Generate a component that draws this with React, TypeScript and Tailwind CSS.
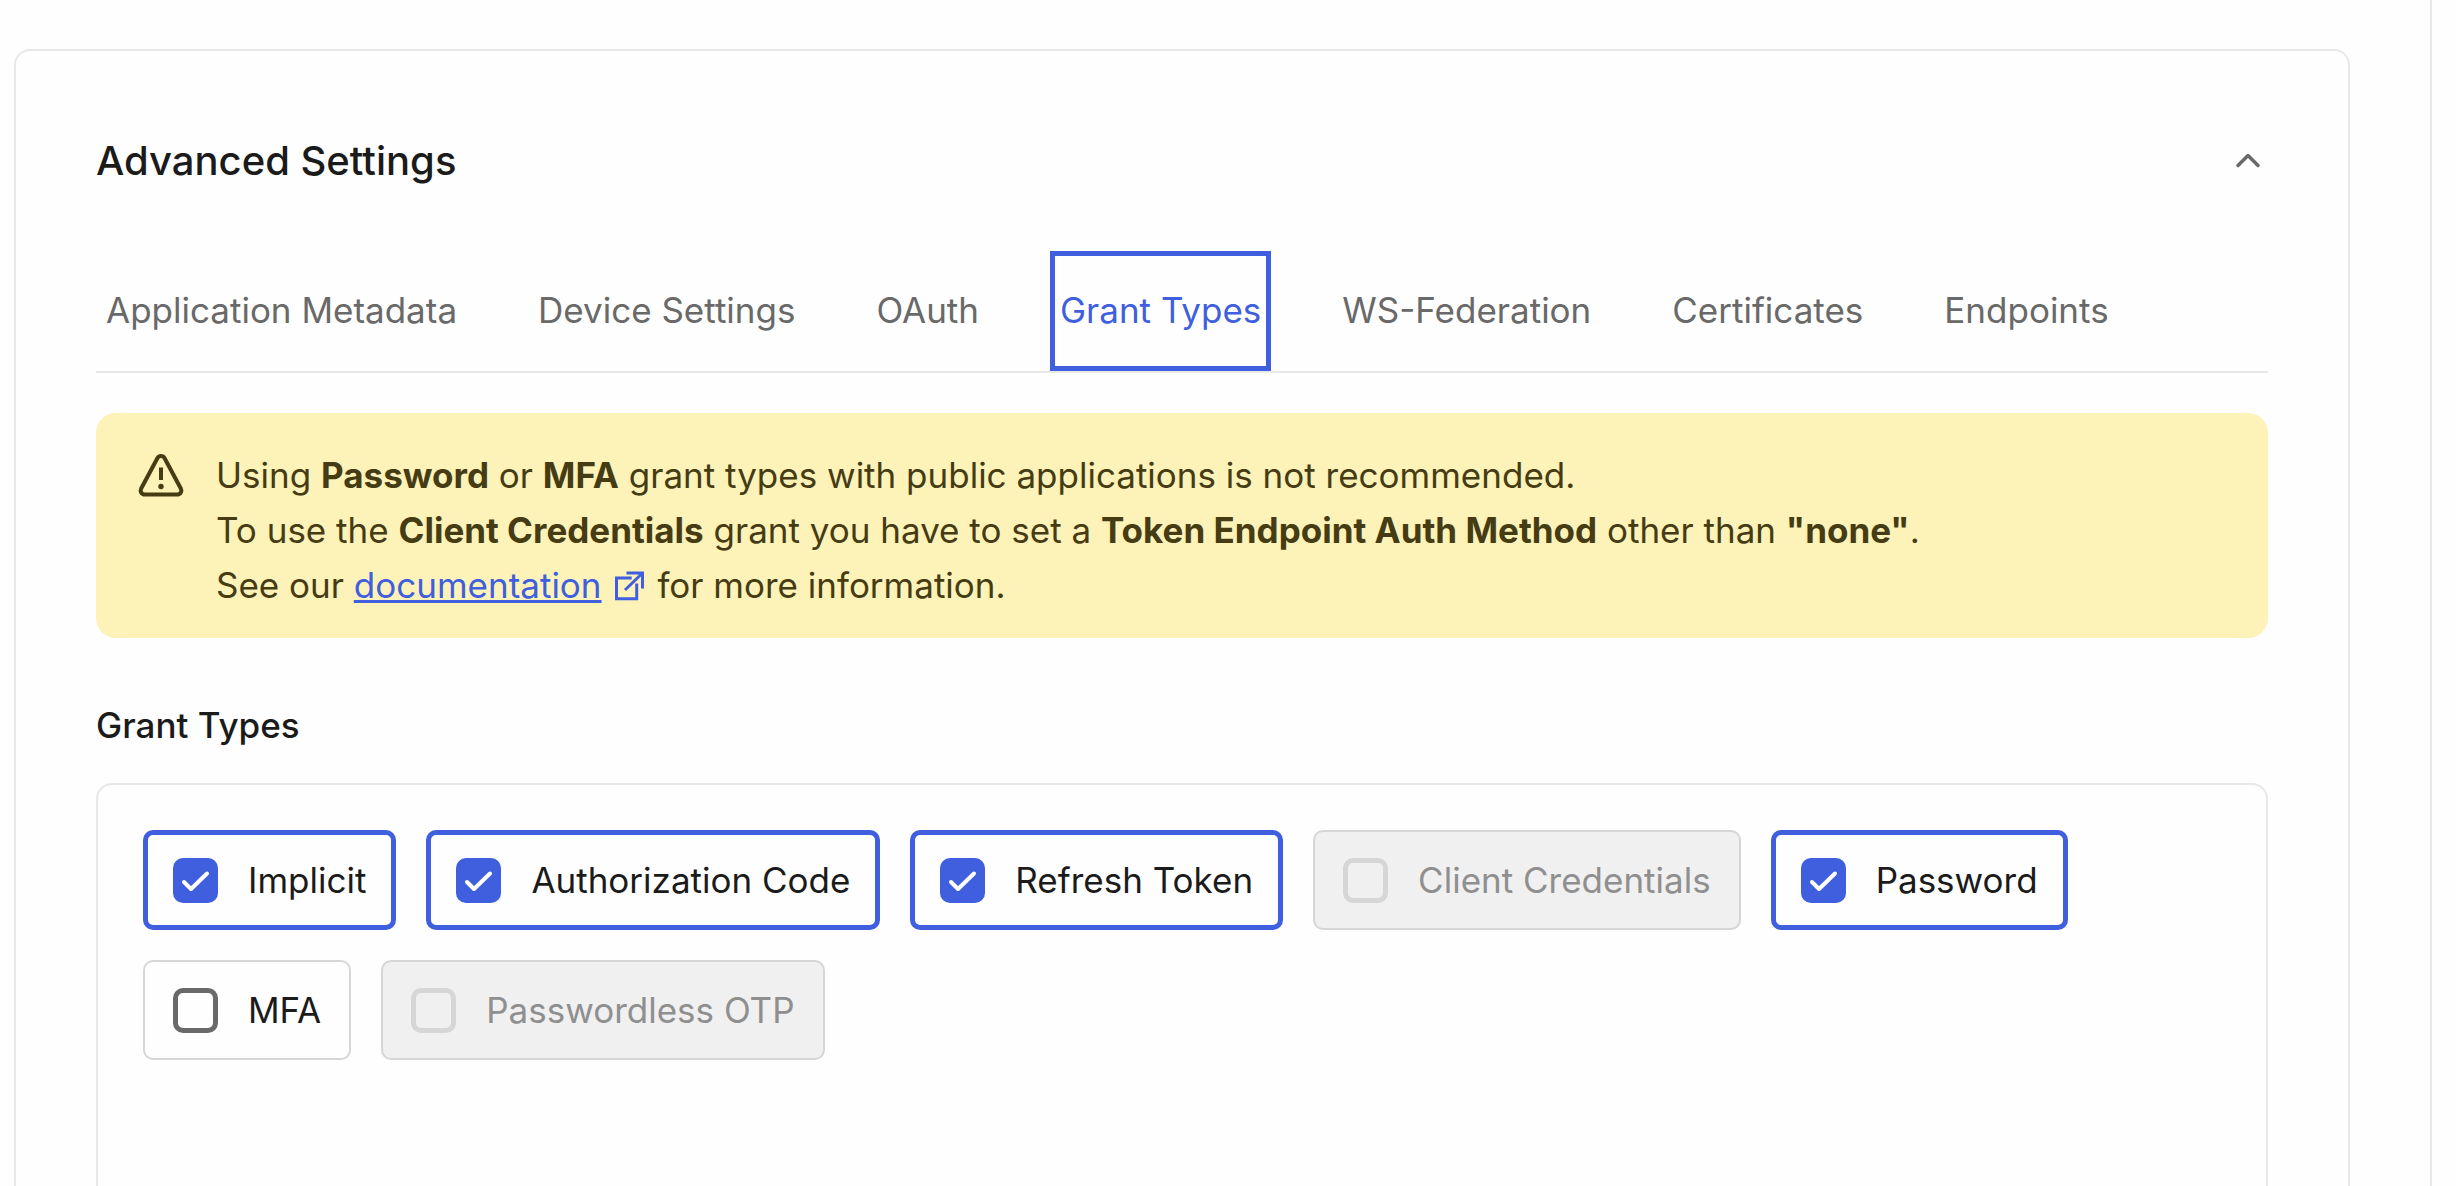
import React from "react";

const tabs = ["Application Metadata", "Device Settings", "OAuth", "Grant Types", "WS-Federation", "Certificates", "Endpoints"];

type Grant = { label: string; checked?: boolean; disabled?: boolean };

const grants: Grant[] = [
  { label: "Implicit", checked: true },
  { label: "Authorization Code", checked: true },
  { label: "Refresh Token", checked: true },
  { label: "Client Credentials", disabled: true },
  { label: "Password", checked: true },
  { label: "MFA" },
  { label: "Passwordless OTP", disabled: true },
];

function WarningIcon() {
  return (
    <svg viewBox="0 0 50 50" className="mt-[2px] size-[50px] shrink-0" fill="none" stroke="currentColor" strokeWidth="4" strokeLinecap="round" strokeLinejoin="round">
      <path d="M21.500 8L5.200 38.500C3.700 41.500 5.500 44.500 9 44.500H41C44.500 44.500 46.300 41.500 44.800 38.500L28.500 8C27 5.200 23 5.200 21.500 8Z" />
      <path d="M25 17.500V30" strokeLinecap="butt" />
      <circle cx="25" cy="36.500" r="2.700" fill="currentColor" stroke="none" />
    </svg>
  );
}

function ExternalLinkIcon() {
  return (
    <svg viewBox="0 0 32 30" className="mr-0.5 ml-3 inline-block h-[30px] w-8 align-[-3px]" fill="none" stroke="currentColor" strokeWidth="3">
      <path d="M17.700 7H2.500V27.700H22.700V12.500" />
      <path d="M12.500 2H28.500V17.500M28 2.500L11 19" />
    </svg>
  );
}

function GrantOption({ label, checked, disabled }: Grant) {
  const frame = checked
    ? "border-[5px] border-[#3f5fdf] px-[25px] text-[#1b1b1b]"
    : disabled
      ? "border-2 border-[#d6d6d6] bg-[#f0f0f0] px-7 text-[#8f8f8f]"
      : "border-2 border-[#d6d6d6] px-7 text-[#1b1b1b]";
  const box = checked ? "bg-[#3f5fdf]" : disabled ? "border-[5px] border-[#d6d6d6]" : "border-[5px] border-[#696969]";
  return (
    <label className={"flex h-[100px] items-center gap-[30px] rounded-[10px] " + frame}>
      <span className="relative flex size-[45px]">
        <input type="checkbox" defaultChecked={checked} disabled={disabled} className={"size-full appearance-none rounded-[10px] " + box} />
        {checked && (
          <svg viewBox="0 0 45 45" className="pointer-events-none absolute inset-0" fill="none" stroke="white" strokeWidth="4" strokeLinecap="round" strokeLinejoin="round">
            <path d="M11 24L18 31L34 15.500" />
          </svg>
        )}
      </span>
      <span className="text-[35px] leading-[50px]">{label}</span>
    </label>
  );
}

export default function App() {
  return (
    <div className="h-screen overflow-hidden bg-[#fefefe] font-['Inter',sans-serif] text-[#1b1b1b]">
      <div className="mr-6 h-full border-r-2 border-[#e8e8e8] pt-[49px] pr-20 pl-[14px]">
        <section className="h-full rounded-t-2xl border-2 border-b-0 border-[#e8e8e8] px-20 pt-20">
          <header className="flex h-[60px] items-center justify-between">
            <h2 className="text-[40px] font-medium">Advanced Settings</h2>
            <button aria-label="Collapse" aria-expanded="true" className="flex size-10 items-center justify-center text-[#696969]">
              <svg viewBox="0 0 40 40" className="size-10" fill="none" stroke="currentColor" strokeWidth="3.500" strokeLinejoin="round" strokeLinecap="round">
                <path d="M10 24.500L20 14.500L30 24.500" />
              </svg>
            </button>
          </header>
          <nav className="mt-[60px] flex gap-[61px] border-b-2 border-[#e8e8e8]">
            {tabs.map((t) => (
              <button key={t} className={"h-[120px] border-[5px] px-[5px] pb-[2px] text-[35px] " + (t === "Grant Types" ? "border-[#3f5fdf] text-[#3f5fdf]" : "border-transparent text-[#696969]")}>
                {t}
              </button>
            ))}
          </nav>
          <div className="mt-10 flex gap-[30px] rounded-[20px] bg-[#fdf2b8] px-10 pt-[35px] pb-[25px] text-[35px] leading-[55px] text-[#453c14]">
            <WarningIcon />
            <p>
              Using <b>Password</b> or <b>MFA</b> grant types with public applications is not recommended.
              <br />
              To use the <b>Client Credentials</b> grant you have to set a <b>Token Endpoint Auth Method</b> other than <b>"none"</b>.
              <br />
              See our{" "}
              <a href="#" className="text-[#3f5fdf]">
                <span className="underline decoration-3 underline-offset-2">documentation</span>
                <ExternalLinkIcon />
              </a>{" "}
              for more information.
            </p>
          </div>
          <h3 className="mt-[60px] text-[35px] leading-[55px] font-medium">Grant Types</h3>
          <div className="mt-[30px] flex min-h-[500px] flex-wrap content-start gap-[30px] rounded-2xl border-2 border-[#e8e8e8] p-[45px]">
            {grants.map((g) => (
              <GrantOption key={g.label} {...g} />
            ))}
          </div>
        </section>
      </div>
    </div>
  );
}
